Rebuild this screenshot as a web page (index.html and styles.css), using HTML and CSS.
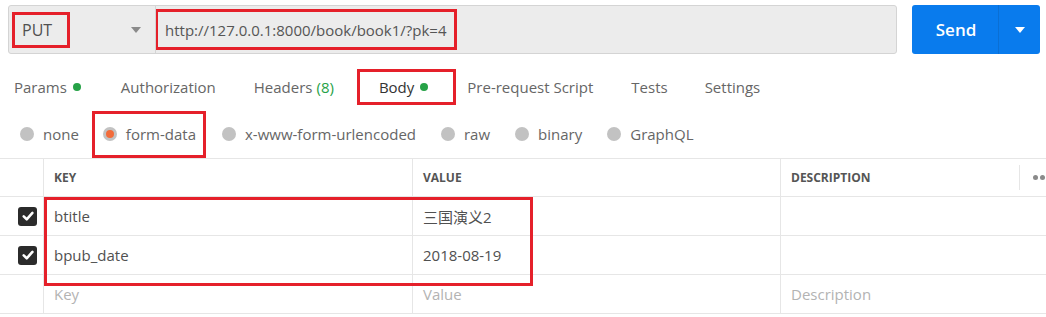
FILE: index.html
```html
<!DOCTYPE html>
<html lang="en">
<head>
    <meta charset="UTF-8">
    <title>PUT book1</title>
    <link rel="stylesheet" href="styles.css">
</head>
<body>
    <div class="page">
        <div class="topbar">
            <div class="request">
                <div class="method">
                    <span class="method-name mark">PUT</span>
                    <span class="caret"></span>
                </div>
                <div class="url">
                    <span class="url-text mark">http://127.0.0.1:8000/book/book1/?pk=4</span>
                </div>
            </div>
            <div class="send">
                <span class="send-label">Send</span>
                <span class="send-more"><span class="caret white"></span></span>
            </div>
        </div>

        <div class="tabs">
            <span class="tab">Params <i class="dot"></i></span>
            <span class="tab">Authorization</span>
            <span class="tab">Headers <em class="count">(8)</em></span>
            <span class="tab active mark">Body <i class="dot"></i></span>
            <span class="tab">Pre-request Script</span>
            <span class="tab">Tests</span>
            <span class="tab">Settings</span>
        </div>

        <div class="modes">
            <span class="mode"><i class="radio"></i>none</span>
            <span class="mode selected mark"><i class="radio"></i>form-data</span>
            <span class="mode"><i class="radio"></i>x-www-form-urlencoded</span>
            <span class="mode"><i class="radio"></i>raw</span>
            <span class="mode"><i class="radio"></i>binary</span>
            <span class="mode"><i class="radio"></i>GraphQL</span>
        </div>

        <div class="table">
            <div class="row head">
                <div class="cell check"></div>
                <div class="cell key">KEY</div>
                <div class="cell value">VALUE</div>
                <div class="cell desc">DESCRIPTION</div>
                <div class="cell more"><span class="dots"></span></div>
            </div>
            <div class="row">
                <div class="cell check"><span class="box"><svg viewBox="0 0 12 12"><path d="M2.3 6.3 L4.9 8.8 L9.8 3.4" /></svg></span></div>
                <div class="cell key">btitle</div>
                <div class="cell value">三国演义2</div>
                <div class="cell desc"></div>
                <div class="cell more"></div>
            </div>
            <div class="row">
                <div class="cell check"><span class="box"><svg viewBox="0 0 12 12"><path d="M2.3 6.3 L4.9 8.8 L9.8 3.4" /></svg></span></div>
                <div class="cell key">bpub_date</div>
                <div class="cell value">2018-08-19</div>
                <div class="cell desc"></div>
                <div class="cell more"></div>
            </div>
            <div class="row empty">
                <div class="cell check"></div>
                <div class="cell key">Key</div>
                <div class="cell value">Value</div>
                <div class="cell desc">Description</div>
                <div class="cell more"></div>
            </div>
            <div class="rows-mark"></div>
        </div>
    </div>
</body>
</html>
```

FILE: styles.css
```css
body {
    margin: 0;
    font-family: "Open Sans", "Noto Sans CJK SC", sans-serif;
    color: #505050;
    background: #fff;
}
.page {
    width: 1046px;
    height: 317px;
    overflow: hidden;
}
.mark {
    outline: 3px solid #e5202a;
    outline-offset: -3px;
}

/* request bar */
.topbar {
    display: flex;
    padding: 5px 6px 0 8px;
    height: 49px;
}
.request {
    display: flex;
    width: 889px;
    box-sizing: border-box;
    background: #ececec;
    border: 1px solid #d4d4d4;
    border-radius: 3px;
}
.method {
    width: 143px;
    display: flex;
    align-items: center;
    border-right: 1px solid #d4d4d4;
    padding-left: 3px;
    position: relative;
}
.method-name {
    display: inline-flex;
    align-items: center;
    width: 58px;
    height: 36px;
    padding-left: 10px;
    box-sizing: border-box;
    font-size: 16px;
    font-weight: 400;
    color: #505050;
}
.caret {
    width: 0;
    height: 0;
    border-left: 5px solid transparent;
    border-right: 5px solid transparent;
    border-top: 6px solid #8a8a8a;
    margin-left: auto;
    margin-right: 14px;
}
.caret.white {
    border-top-color: #fff;
    margin: 0;
}
.url {
    flex: 1;
    display: flex;
    align-items: center;
    margin-left: -1px;
}
.url-text {
    display: inline-flex;
    align-items: center;
    height: 41px;
    width: 302px;
    padding-left: 10px;
    box-sizing: border-box;
    font-size: 15px;
    color: #555;
}
.send {
    display: flex;
    margin-left: 15px;
    width: 128px;
    background: #097bed;
    border-radius: 3px;
    color: #fff;
}
.send-label {
    flex: 1;
    display: flex;
    align-items: center;
    justify-content: center;
    font-size: 17px;
    font-weight: 600;
    padding-left: 2px;
}
.send-more {
    width: 41px;
    display: flex;
    align-items: center;
    justify-content: center;
    border-left: 1px solid #0a6fd4;
}

/* tabs */
.tabs {
    display: flex;
    align-items: center;
    gap: 38px;
    height: 51px;
    padding: 15px 0 0 14px;
    box-sizing: border-box;
    font-size: 15px;
}
.tab {
    display: inline-flex;
    align-items: center;
    color: #666;
    white-space: nowrap;
}
.tab:nth-child(2) {
    margin-left: 2px;
}
.tab.active {
    color: #333;
    height: 36px;
    padding: 0 28px 0 22px;
    margin: 0 -27px 0 -15px;
    box-shadow: inset 0 -2px 0 #f26b3a;
}
.tab:last-child {
    margin-left: -1px;
}
.count {
    font-style: normal;
    color: #26a247;
    margin-left: 4px;
}
.dot {
    width: 8px;
    height: 8px;
    border-radius: 50%;
    background: #26a247;
    margin-left: 6px;
}

/* body modes */
.modes {
    display: flex;
    align-items: center;
    gap: 25px;
    height: 53px;
    padding: 5px 0 0 20px;
    box-sizing: border-box;
    font-size: 15px;
}
.mode {
    display: inline-flex;
    align-items: center;
    color: #666;
    white-space: nowrap;
}
.mode.selected {
    height: 47px;
    padding: 0 10px 0 11px;
    margin: 0 -9px 0 -12px;
}
.radio {
    width: 14px;
    height: 14px;
    border-radius: 50%;
    background: #c2c2c2;
    margin-right: 9px;
    position: relative;
}
.selected .radio::after {
    content: "";
    position: absolute;
    left: 3px;
    top: 3px;
    width: 8px;
    height: 8px;
    border-radius: 50%;
    background: #f26b3a;
}

/* key/value table */
.table {
    position: relative;
    border-top: 1px solid #e6e6e6;
}
.row {
    display: flex;
    height: 39px;
    border-bottom: 1px solid #e6e6e6;
    box-sizing: border-box;
    font-size: 15px;
}
.row.head {
    height: 38px;
    font-size: 12px;
    font-weight: 700;
    color: #555;
}
.cell {
    display: flex;
    align-items: center;
    box-sizing: border-box;
    padding-left: 10px;
}
.check {
    width: 44px;
    border-right: 1px solid #e6e6e6;
    justify-content: flex-end;
    padding: 0 6px 0 0;
}
.key {
    width: 369px;
    border-right: 1px solid #e6e6e6;
}
.value {
    width: 368px;
    border-right: 1px solid #e6e6e6;
}
.desc {
    width: 239px;
}
.head .desc {
    border-right: 1px solid #e6e6e6;
    margin: 6px 0;
}
.more {
    flex: 1;
    padding-left: 13px;
}
.dots {
    width: 5px;
    height: 5px;
    border-radius: 50%;
    background: #8a8a8a;
    box-shadow: 7px 0 0 #8a8a8a;
}
.empty .cell {
    color: #b3b3b3;
}
.box {
    width: 19px;
    height: 19px;
    border-radius: 3px;
    background: #2b2b2b;
    display: flex;
    align-items: center;
    justify-content: center;
}
.box svg {
    width: 14px;
    height: 14px;
    fill: none;
    stroke: #fff;
    stroke-width: 2.2;
    stroke-linecap: round;
    stroke-linejoin: round;
}
.rows-mark {
    position: absolute;
    left: 44px;
    top: 38px;
    width: 489px;
    height: 89px;
    border: 3px solid #e5202a;
    box-sizing: border-box;
}
```
